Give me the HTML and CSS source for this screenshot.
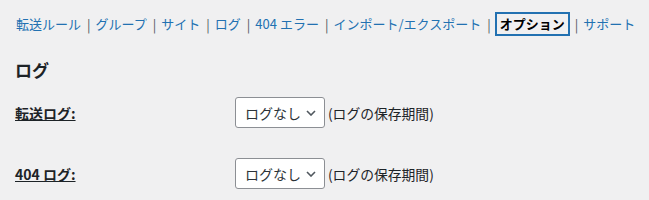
FILE: index.html
```
<!DOCTYPE html>
<html lang="ja">
  <head>
    <meta charset="utf-8">
    <link rel="stylesheet" href="styles.css">
  </head>
  <body>
    <div class="wrap">
      <ul class="subsubsub">
        <li><a href="#">転送ルール</a><span class="sep">|</span></li>
        <li><a href="#">グループ</a><span class="sep">|</span></li>
        <li><a href="#">サイト</a><span class="sep">|</span></li>
        <li><a href="#">ログ</a><span class="sep">|</span></li>
        <li><a href="#">404 エラー</a><span class="sep">|</span></li>
        <li><a href="#">インポート/エクスポート</a><span class="sep">|</span></li>
        <li><a href="#" class="current">オプション</a><span class="sep">|</span></li>
        <li><a href="#">サポート</a></li>
      </ul>

      <h2 class="title">ログ</h2>

      <table class="form-table">
        <tr>
          <th><label class="lbl">転送ログ:</label></th>
          <td>
            <span class="select">ログなし<svg viewBox="0 0 10 6" width="10" height="6"><path d="M1 1l4 4 4-4" fill="none" stroke="#50575e" stroke-width="1.6"/></svg></span>
            <span class="desc">(ログの保存期間)</span>
          </td>
        </tr>
        <tr>
          <th><label class="lbl">404 ログ:</label></th>
          <td>
            <span class="select">ログなし<svg viewBox="0 0 10 6" width="10" height="6"><path d="M1 1l4 4 4-4" fill="none" stroke="#50575e" stroke-width="1.6"/></svg></span>
            <span class="desc">(ログの保存期間)</span>
          </td>
        </tr>
      </table>
    </div>
  </body>
</html>
```

FILE: styles.css
```
body {
  margin: 0;
  background: #f0f0f1;
  color: #1d2327;
  font-family: "Noto Sans CJK JP", "Noto Sans", sans-serif;
  font-size: 13px;
}

.wrap {
  padding: 0 15px;
}

.subsubsub {
  display: flex;
  align-items: center;
  list-style: none;
  margin: 0;
  padding: 12px 0 0 0;
  height: 24px;
  color: #646970;
}
.subsubsub li {
  display: flex;
  align-items: center;
  white-space: nowrap;
}
.subsubsub a {
  color: #2271b1;
  text-decoration: none;
  line-height: 20px;
  padding: 0 1px;
}
.subsubsub a.current {
  color: #000;
  font-weight: 700;
  border: 2px solid #2271b1;
  padding: 0 3px;
}
.subsubsub .sep {
  color: #50575e;
  padding: 0 4px 0 5px;
}

.title {
  font-size: 17px;
  font-weight: 700;
  margin: 22px 0 0 0;
  line-height: 24px;
}

.form-table {
  border-collapse: collapse;
  margin-top: 0;
}
.form-table th {
  width: 200px;
  padding: 15px 10px 15px 0;
  text-align: left;
  vertical-align: middle;
}
.form-table td {
  padding: 15px 0 15px 10px;
  vertical-align: middle;
}
.lbl {
  font-size: 14px;
  font-weight: 600;
  text-decoration: underline;
}

.select {
  display: inline-flex;
  align-items: center;
  justify-content: space-between;
  box-sizing: border-box;
  width: 90px;
  height: 31px;
  padding: 0 8px 0 9px;
  background: #fff;
  border: 1px solid #8c8f94;
  border-radius: 3px;
  font-size: 14px;
  color: #2c3338;
  vertical-align: middle;
}
.desc {
  font-size: 13.8px;
  color: #1d2327;
  vertical-align: middle;
}
```
